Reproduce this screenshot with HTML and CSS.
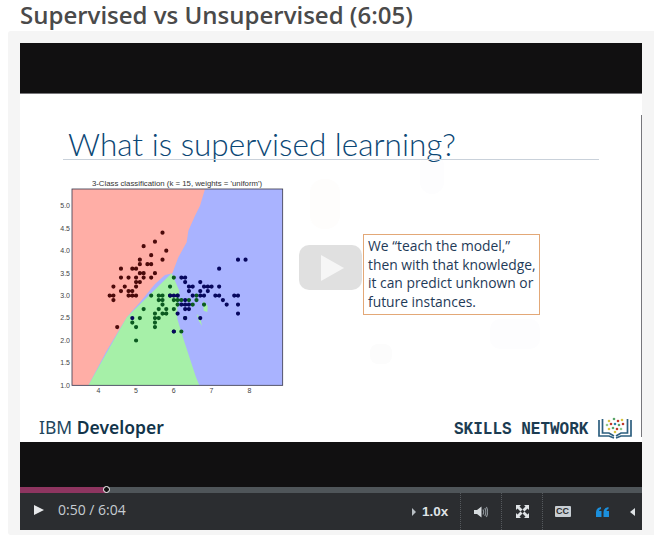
FILE: index.html
```html
<!DOCTYPE html>
<html lang="en">
    <head>
        <meta charset="UTF-8" />
        <title>Supervised vs Unsupervised</title>
        <link rel="stylesheet" href="styles.css">
    </head>
    <body>
        <h1 class="nadpis">Supervised vs Unsupervised (6:05)</h1>
        <div class="ramec">
            <div class="video">
                <div class="pruh-horni"></div>
                <div class="slide">
                    <svg class="vodoznak" width="622" height="348" viewBox="0 0 622 348">
                        <rect x="290" y="85" width="30" height="50" rx="14" fill="#fefdfc"/>
                        <rect x="400" y="60" width="24" height="40" rx="12" fill="#fdfdfe"/>
                        <rect x="350" y="250" width="22" height="20" rx="8" fill="#fcfcfc"/>
                        <rect x="470" y="225" width="50" height="30" rx="10" fill="#fdfdfe"/>
                    </svg>
                    <div class="slide-nadpis">What is supervised learning?</div>
                    <div class="slide-linka"></div>
                    <div class="linka-prava"></div>

                    <svg class="graf" width="260" height="230" viewBox="0 0 780 690">
                        <text class="graf-titulek" x="411" y="36" text-anchor="middle">3-Class classification (k = 15, weights = 'uniform')</text>
                        <rect x="96" y="45" width="632" height="589" fill="#a9b3ff"/>
                        <path fill="#a6f0a8" d="M145 634 L260 430 L395 298 L418 350 L412 390 L412 435 L432 500 L468 610 L478 634 Z"/>
                        <path fill="#ffaea6" d="M96 45 H495 L480 95 L465 125 L445 170 L440 205 L415 250 L397 298 L375 303 L345 330 L300 385 L260 430 L200 530 L145 634 H96 Z"/>
                        <path fill="#a6f0a8" d="M490 381 L503 396 L502 414 L491 410 Z M470 420 L480 430 L486 456 L476 440 Z"/>
                        <rect x="96" y="45" width="632" height="589" fill="none" stroke="#3c3c50" stroke-width="2.5"/>
                        <g class="graf-osa">
                            <text x="90" y="102" text-anchor="end">5.0</text>
                            <text x="90" y="170" text-anchor="end">4.5</text>
                            <text x="90" y="237" text-anchor="end">4.0</text>
                            <text x="90" y="305" text-anchor="end">3.5</text>
                            <text x="90" y="372" text-anchor="end">3.0</text>
                            <text x="90" y="439" text-anchor="end">2.5</text>
                            <text x="90" y="507" text-anchor="end">2.0</text>
                            <text x="90" y="574" text-anchor="end">1.5</text>
                            <text x="90" y="641" text-anchor="end">1.0</text>
                            <text x="175" y="658" text-anchor="middle">4</text>
                            <text x="288" y="658" text-anchor="middle">5</text>
                            <text x="401" y="658" text-anchor="middle">6</text>
                            <text x="514" y="658" text-anchor="middle">7</text>
                            <text x="628" y="658" text-anchor="middle">8</text>
                        </g>
                        <g transform="translate(-278 769) scale(11.325 -13.475)">
                            <path class="body" stroke="#4c0a0a" d="M51 35h0M49 30h0M47 32h0M46 31h0M50 36h0M54 39h0M46 34h0M50 34h0M44 29h0M49 31h0M54 37h0M48 34h0M48 30h0M43 30h0M58 40h0M57 44h0M51 35h0M57 38h0M51 38h0M54 34h0M51 37h0M46 36h0M51 33h0M50 30h0M52 35h0M52 34h0M47 32h0M48 31h0M52 41h0M55 42h0M50 32h0M55 35h0M49 36h0M44 30h0M45 23h0M44 32h0M53 37h0M50 33h0"/>
                            <path class="body" stroke="#0b5a20" d="M55 23h0M65 28h0M57 28h0M49 24h0M66 29h0M52 27h0M50 20h0M59 30h0M60 22h0M61 29h0M56 29h0M58 27h0M62 22h0M56 25h0M59 32h0M61 28h0M63 25h0M64 29h0M66 30h0M68 28h0M60 29h0M57 26h0M55 24h0M60 27h0M54 30h0M60 34h0M56 30h0M55 25h0M55 26h0M61 30h0M58 26h0M50 23h0M56 27h0M57 30h0M57 29h0M62 29h0M51 25h0"/>
                            <path class="body" stroke="#07075e" d="M63 33h0M71 30h0M63 29h0M65 30h0M76 30h0M49 25h0M73 29h0M67 25h0M72 36h0M65 32h0M64 27h0M68 30h0M64 32h0M77 38h0M77 26h0M60 22h0M69 32h0M77 28h0M63 27h0M67 33h0M72 32h0M62 28h0M61 30h0M64 28h0M72 30h0M74 28h0M79 38h0M63 28h0M61 26h0M77 30h0M63 34h0M64 31h0M60 30h0M69 31h0M67 31h0M68 32h0M67 30h0M63 25h0M62 34h0M59 30h0M70 32h0M64 32h0M69 31h0"/>
                        </g>
                    </svg>

                    <div class="slide-box">We “teach the model,”<br>then with that knowledge,<br>it can predict unknown or<br>future instances.</div>

                    <div class="logo-ibm">IBM <b>Developer</b></div>
                    <div class="logo-skills">SKILLS NETWORK</div>
                    <svg class="logo-kniha" width="36" height="22" viewBox="0 0 36 22">
                        <g fill="none" stroke="#2d5f7f" stroke-width="1.7">
                            <path d="M2 3V19H12L17 21"/>
                            <path d="M5.500 2V16H12L17 19"/>
                            <path d="M34 3V19H24L19 21"/>
                            <path d="M30.500 2V16H24L19 19"/>
                        </g>
                        <g>
                            <circle cx="12" cy="4" r="1.300" fill="#d9c441"/>
                            <circle cx="17" cy="2" r="1.300" fill="#5aa469"/>
                            <circle cx="21" cy="4" r="1.300" fill="#c0392b"/>
                            <circle cx="25" cy="3" r="1.300" fill="#d9c441"/>
                            <circle cx="10" cy="8" r="1.300" fill="#8fc98f"/>
                            <circle cx="14" cy="7" r="1.300" fill="#c0392b"/>
                            <circle cx="18" cy="7" r="1.300" fill="#2d7fa8"/>
                            <circle cx="22" cy="8" r="1.300" fill="#5aa469"/>
                            <circle cx="26" cy="7" r="1.300" fill="#c0392b"/>
                            <circle cx="12" cy="12" r="1.300" fill="#d9c441"/>
                            <circle cx="16" cy="11" r="1.300" fill="#5aa469"/>
                            <circle cx="20" cy="12" r="1.300" fill="#c0392b"/>
                            <circle cx="24" cy="12" r="1.300" fill="#8fc98f"/>
                            <circle cx="18" cy="15" r="1.300" fill="#d9c441"/>
                        </g>
                    </svg>

                    <div class="play-velke"><span class="play-trojuhelnik"></span></div>
                </div>
                <div class="pruh-dolni"></div>
                <div class="progress">
                    <div class="progress-hotovo"></div>
                    <div class="progress-bod"></div>
                </div>
                <div class="ovladani">
                    <span class="tl-play"></span>
                    <span class="cas">0:50 / 6:04</span>
                    <span class="mezera"></span>
                    <div class="tl tl-rychlost"><span class="sipka-prava"></span><b>1.0x</b></div>
                    <div class="tl tl-hlasitost">
                        <svg width="14" height="12" viewBox="0 0 14 12">
                            <path fill="#d5dadd" d="M0 4H3L7.500 .5V11.500L3 8H0Z"/>
                            <path fill="none" stroke="#8f969b" stroke-width="1.100" d="M9 3.500Q10.300 6 9 8.500M10.800 2Q12.800 6 10.800 10M12.400 1Q15 6 12.400 11"/>
                        </svg>
                    </div>
                    <div class="tl tl-cela">
                        <svg width="13" height="13" viewBox="0 0 13 13" fill="#dfe3e6">
                            <path d="M0 0H5L3.500 1.500L6.500 4.500L4.500 6.500L1.500 3.500L0 5Z"/>
                            <path d="M13 0H8L9.500 1.500L6.500 4.500L8.500 6.500L11.500 3.500L13 5Z"/>
                            <path d="M0 13H5L3.500 11.500L6.500 8.500L4.500 6.500L1.500 9.500L0 8Z"/>
                            <path d="M13 13H8L9.500 11.500L6.500 8.500L8.500 6.500L11.500 9.500L13 8Z"/>
                        </svg>
                    </div>
                    <div class="tl tl-cc"><span class="cc">CC</span></div>
                    <div class="tl tl-citace">
                        <svg width="13" height="10" viewBox="0 0 13 10" fill="#1b8fdc">
                            <path d="M0 10V5Q0 1 5 0V2Q3 2.500 3 4H5.500V10Z"/>
                            <path d="M7.500 10V5Q7.500 1 12.500 0V2Q10.500 2.500 10.500 4H13V10Z"/>
                        </svg>
                    </div>
                    <div class="tl tl-zpet"><span class="sipka-leva"></span></div>
                </div>
            </div>
        </div>
    </body>
</html>
```

FILE: styles.css
```css
html, body {
    margin: 0;
    padding: 0;
    background: #fff;
}

body {
    width: 654px;
    height: 536px;
    overflow: hidden;
    font-family: "Open Sans", sans-serif;
}

.nadpis {
    margin: 0;
    padding: 1px 0 0 20px;
    height: 30px;
    font-size: 24px;
    line-height: 27px;
    font-weight: 600;
    color: #4a4a4a;
}

.ramec {
    margin-left: 8px;
    padding: 12px 12px 5px 12px;
    background: #f5f5f5;
    border-radius: 3px 0 0 3px;
}

.video {
    width: 622px;
}

.pruh-horni {
    height: 50px;
    background: #111011;
}

.slide {
    position: relative;
    height: 349px;
    background: #fff;
    border-top: 1px solid #77767a;
    box-sizing: border-box;
    overflow: hidden;
}

.vodoznak {
    position: absolute;
    left: 0;
    top: 0;
}

.slide-nadpis {
    position: absolute;
    left: 48px;
    top: 28px;
    font-family: Lato, sans-serif;
    font-weight: 300;
    font-size: 31.500px;
    line-height: 44px;
    white-space: nowrap;
    color: #0b4775;
}

.slide-linka {
    position: absolute;
    left: 43px;
    top: 65px;
    width: 536px;
    height: 1px;
    background: #c9d1da;
}

.linka-prava {
    position: absolute;
    right: 0;
    top: 21px;
    bottom: 5px;
    width: 1px;
    background: #77777c;
}

.graf {
    position: absolute;
    left: 20px;
    top: 80px;
}

.graf-titulek {
    font-family: "Liberation Sans", sans-serif;
    font-size: 23.400px;
    fill: #333;
}

.graf-osa text {
    font-family: "Liberation Sans", sans-serif;
    font-size: 21px;
    fill: #444;
}

.body {
    fill: none;
    stroke-width: 4.200px;
    stroke-linecap: round;
    vector-effect: non-scaling-stroke;
}

.slide-box {
    position: absolute;
    left: 343px;
    top: 140px;
    width: 177px;
    height: 81px;
    padding: 2px 0 0 4px;
    box-sizing: border-box;
    background: #fff;
    border: 1px solid #e3a877;
    font-size: 13.850px;
    line-height: 18.700px;
    white-space: nowrap;
    color: #1f3b58;
}

.logo-ibm {
    position: absolute;
    left: 19px;
    top: 321px;
    font-family: "Noto Sans", sans-serif;
    font-size: 17.500px;
    line-height: 24px;
    color: #22455c;
}

.logo-ibm b {
    font-weight: 600;
    color: #12344a;
}

.logo-skills {
    position: absolute;
    left: 434px;
    top: 324px;
    font-family: "Liberation Mono", monospace;
    font-weight: bold;
    font-size: 16px;
    line-height: 22px;
    color: #1c3c52;
    transform: scaleY(1.200);
}

.logo-kniha {
    position: absolute;
    left: 577px;
    top: 323px;
}

.play-velke {
    position: absolute;
    left: 279px;
    top: 151px;
    width: 63px;
    height: 45px;
    display: flex;
    align-items: center;
    justify-content: center;
    background: rgba(205, 205, 205, .62);
    border-radius: 10px;
}

.play-trojuhelnik {
    width: 0;
    height: 0;
    margin-left: 3px;
    border-left: 23px solid #f6f6f6;
    border-top: 13px solid transparent;
    border-bottom: 13px solid transparent;
}

.pruh-dolni {
    height: 45px;
    background: #111011;
}

.progress {
    position: relative;
    height: 6px;
    background: #4f5559;
}

.progress-hotovo {
    width: 86px;
    height: 100%;
    background: #8e3560;
}

.progress-bod {
    position: absolute;
    left: 83px;
    top: -1px;
    width: 7px;
    height: 7px;
    box-sizing: border-box;
    background: #111;
    border: 1.500px solid #fff;
    border-radius: 50%;
}

.ovladani {
    display: flex;
    align-items: center;
    height: 37px;
    background: #2b2d30;
}

.tl-play {
    margin-left: 14px;
    margin-bottom: 3px;
    width: 0;
    height: 0;
    border-left: 10px solid #e6e8ea;
    border-top: 5px solid transparent;
    border-bottom: 5px solid transparent;
}

.cas {
    margin-left: 14px;
    margin-bottom: 4px;
    font-size: 14px;
    color: #c6ccd1;
}

.mezera {
    flex: 1;
}

.tl {
    display: flex;
    align-items: center;
    justify-content: center;
    height: 100%;
    box-sizing: border-box;
    border-left: 1px dotted #55595d;
}

.tl-rychlost {
    width: 50px;
    border: 0;
    justify-content: flex-start;
    padding-left: 2px;
    gap: 6px;
    color: #dfe3e6;
    font-family: "Liberation Sans", sans-serif;
    font-size: 13.500px;
}

.sipka-prava {
    width: 0;
    height: 0;
    border-left: 4px solid #b8bec3;
    border-top: 4px solid transparent;
    border-bottom: 4px solid transparent;
}

.tl-hlasitost {
    width: 41px;
}

.tl-cela {
    width: 41px;
}

.tl-cc {
    width: 40px;
}

.cc {
    width: 16px;
    height: 11px;
    box-sizing: border-box;
    background: #c8ced3;
    border-radius: 1px;
    font-family: "Liberation Sans", sans-serif;
    font-weight: bold;
    font-size: 9px;
    line-height: 11px;
    text-align: center;
    color: #2b2d30;
}

.tl-citace {
    width: 40px;
    border: 0;
}

.tl-zpet {
    width: 20px;
    border: 0;
    justify-content: flex-end;
    padding-right: 7px;
}

.sipka-leva {
    width: 0;
    height: 0;
    border-right: 5px solid #dfe3e6;
    border-top: 4.500px solid transparent;
    border-bottom: 4.500px solid transparent;
}
```
